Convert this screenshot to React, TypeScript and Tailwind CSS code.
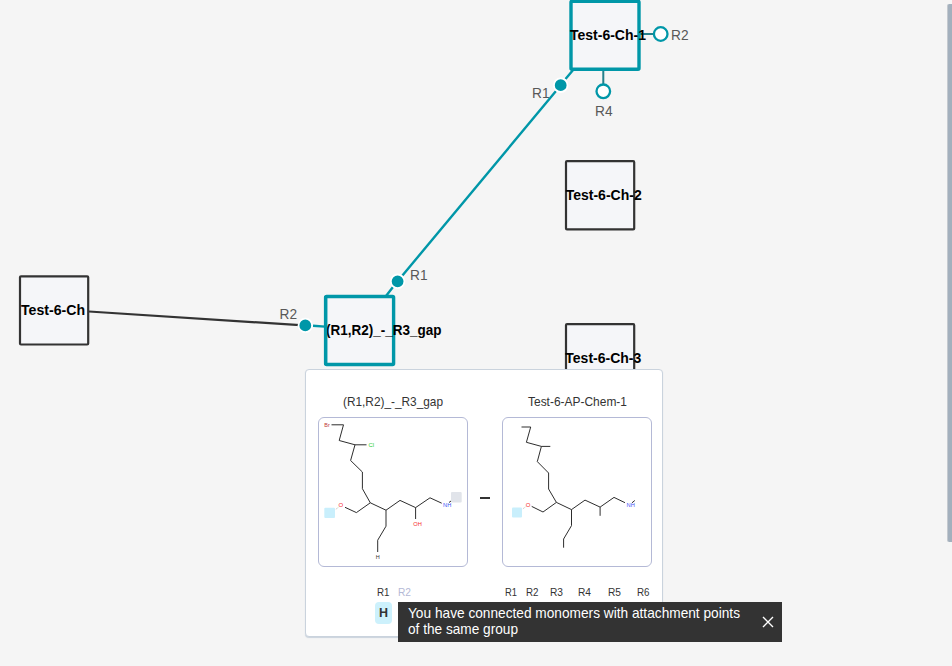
import React from "react";

const TEAL = "#0097a8";
const DARK = "#333333";

type NodeProps = { x: number; y: number; label: string; tx: number; width: number; selected?: boolean };

function MonomerNode({ x, y, label, tx, width, selected }: NodeProps) {
  const sw = selected ? 3.4 : 2.2;
  return (
    <g>
      <rect x={x} y={y} width={selected ? 68 : 68.2} height={selected ? 68 : 68.2} rx="1" fill="#f5f6f9" stroke={selected ? TEAL : DARK} strokeWidth={sw} />
      <text x={tx} y={y + 38.8} textLength={width} lengthAdjust="spacingAndGlyphs" fontSize="14.6" fontWeight="700" fill="#000">{label}</text>
    </g>
  );
}

function PointLabel({ x, y, children }: { x: number; y: number; children: string }) {
  return <text x={x} y={y} fontSize="14.8" fill="#585858" textLength="17.5" lengthAdjust="spacingAndGlyphs">{children}</text>;
}

function Canvas() {
  return (
    <svg className="absolute inset-0" width="952" height="666" viewBox="0 0 952 666" fill="none">
      <path d="M89 311.5L300 325.2" stroke={DARK} strokeWidth="2.2" />
      <path d="M313 325.8L325 326.6M386 296L393 287M402 276L556 91M565.5 79L573.5 69.5" stroke={TEAL} strokeWidth="2.4" />
      <path d="M640 34H654M603.3 70V85" stroke="#24808b" strokeWidth="2" />
      <MonomerNode x={571} y={1.2} label="Test-6-Ch-1" tx={570} width={76} selected />
      <MonomerNode x={20} y={276.3} label="Test-6-Ch" tx={21} width={64} />
      <MonomerNode x={325.6} y={296.5} label="(R1,R2)_-_R3_gap" tx={326} width={115.5} selected />
      <path d="M325.6 296V365" stroke={TEAL} strokeWidth="3.2" />
      <MonomerNode x={566} y={161.2} label="Test-6-Ch-2" tx={565.7} width={76} />
      <MonomerNode x={566} y={324.2} label="Test-6-Ch-3" tx={565.3} width={76} />
      <g fill={TEAL} stroke="#fff" strokeWidth="1.8">
        <circle cx="560.7" cy="85.2" r="6.8" />
        <circle cx="397.6" cy="281.3" r="6.8" />
        <circle cx="305.3" cy="325.4" r="6.8" />
      </g>
      <g fill="#fff" stroke={TEAL} strokeWidth="2.3">
        <circle cx="660.7" cy="34" r="6.8" />
        <circle cx="603.3" cy="91.3" r="6.8" />
      </g>
      <PointLabel x={671} y={40}>R2</PointLabel>
      <PointLabel x={532} y={98}>R1</PointLabel>
      <PointLabel x={595} y={116}>R4</PointLabel>
      <PointLabel x={410} y={280}>R1</PointLabel>
      <PointLabel x={279.5} y={319}>R2</PointLabel>
    </svg>
  );
}

function MoleculeLeft() {
  return (
    <svg width="148" height="148" viewBox="319 418 148 148" fill="none">
      <g stroke="#222" strokeWidth="0.95">
        <path d="M331.5 424.8H343.5L339.2 440.5L355 444.8H366.5M355 444.8L350.6 460.5L362.4 472V488.7L370.3 502.8L386 510.2L400 500.4L415.6 507.6L430 497.8L441.7 503.2M370.3 502.8L356.4 512.6L345 507.3M415.6 507.6V519M386 510.2V526.2L377.7 540.2V552" />
        <path d="M449 502.5L453 499.5" />
      </g>
      <path d="M338.3 507.4L335.5 509.5" stroke="#aaa" strokeWidth="0.8" strokeDasharray="1 1" />
      <rect x="324.3" y="507.8" width="10.7" height="10.2" rx="1" fill="#c9effc" />
      <rect x="451" y="492" width="10.7" height="10.6" rx="1" fill="#e1e4ea" />
      <g fontSize="6" textAnchor="middle">
        <text x="327" y="427" fill="#bd3535" fontSize="5.5">Br</text>
        <text x="371.2" y="447" fill="#22cf32" fontSize="5.8">Cl</text>
        <text x="340.8" y="507.2" fill="#f52c2c">O</text>
        <text x="417.6" y="526" fill="#f52c2c" fontSize="5.7">OH</text>
        <text x="447.2" y="507" fill="#4054f5" fontSize="5.7">NH</text>
        <text x="377.7" y="559.2" fill="#333" fontSize="5.5">H</text>
      </g>
    </svg>
  );
}

function MoleculeRight() {
  return (
    <svg width="148" height="148" viewBox="503 418 148 148" fill="none">
      <g stroke="#222" strokeWidth="0.95">
        <path d="M521.5 427H530.7L526.4 442.3L541.4 446.4H550.3M541.4 446.4L537.3 461.6L548.6 473V489L556.4 502.4L571.5 509.6L585 500.1L600.1 507.1L614 497.4L625 502.7M556.4 502.4L543 512L531.7 506.4M600.1 507.1V515.8M571.5 509.6V525.6L563.6 539V547.7" />
        <path d="M632 502.8L634.8 500.5" />
      </g>
      <path d="M525.3 507L522.3 509.3" stroke="#aaa" strokeWidth="0.8" strokeDasharray="1 1" />
      <rect x="512" y="507.4" width="10" height="10" rx="1" fill="#c9effc" />
      <g fontSize="6" textAnchor="middle">
        <text x="528" y="507.1" fill="#f52c2c">O</text>
        <text x="630.7" y="507" fill="#4054f5" fontSize="5.7">NH</text>
      </g>
    </svg>
  );
}

function FitText({ text, width, size, color = DARK }: { text: string; width: number; size: number; color?: string }) {
  return (
    <svg width={width} height="16" className="block shrink-0 overflow-visible">
      <text x="0" y="12" fontSize={size} fill={color} textLength={width} lengthAdjust="spacingAndGlyphs">{text}</text>
    </svg>
  );
}

export default function App() {
  return (
    <main className="relative h-[666px] w-[952px] overflow-hidden bg-[#f5f5f5] font-['Liberation_Sans',Arial,sans-serif] text-[#333]">
      <Canvas />

      <section className="absolute left-[305px] top-[369px] h-[268px] w-[358px] rounded-[4px] border border-[#cad3dd] bg-white shadow-[0_1px_1px_#cad3dd]">
        <div className="flex items-start px-3 pt-6">
          <div className="flex w-[150px] shrink-0 flex-col items-center">
            <FitText text="(R1,R2)_-_R3_gap" width={100} size={12.8} />
            <div className="mt-[7px] h-[150px] w-[150px] rounded-[6px] border border-[#b4b9d6]"><MoleculeLeft /></div>
            <div className="mt-[17px] ml-[57px] flex items-start gap-[6px] self-start">
              <div className="flex w-[17px] flex-col items-center">
                <FitText text="R1" width={12.5} size={11} />
                <div className="mt-[2px] flex h-[22px] w-[17px] shrink-0 items-center justify-center rounded-[4px] bg-[#cdf1fc] text-[12.5px] font-bold leading-none">H</div>
              </div>
              <FitText text="R2" width={13} size={11} color="#b4b9d6" />
            </div>
          </div>
          <div className="mt-[102.5px] ml-3 h-[2px] w-[10px] shrink-0 bg-[#333]" />
          <div className="ml-3 flex w-[150px] shrink-0 flex-col items-center">
            <FitText text="Test-6-AP-Chem-1" width={99} size={12.8} />
            <div className="mt-[7px] h-[150px] w-[150px] rounded-[6px] border border-[#b4b9d6]"><MoleculeRight /></div>
            <div className="mt-[17px] ml-[3px] flex self-start">
              <div className="flex flex-col">
                <FitText text="R1" width={12} size={11} />
                <div className="mt-[2px] -ml-px h-[22px] w-[15px] rounded-[4px] bg-[#cdf1fc]" />
              </div>
              <div className="ml-[7px] flex">
                <FitText text="R2" width={12.5} size={11} />
                <div className="ml-[11px]"><FitText text="R3" width={13} size={11} /></div>
                <div className="ml-[15px]"><FitText text="R4" width={13} size={11} /></div>
                <div className="ml-[17px]"><FitText text="R5" width={13} size={11} /></div>
                <div className="ml-[16px]"><FitText text="R6" width={12.5} size={11} /></div>
              </div>
            </div>
          </div>
        </div>
      </section>

      <div role="alert" className="absolute left-[398px] top-[602px] flex h-10 w-[384px] items-center justify-between bg-[#333] pl-[10px] pr-2">
        <div className="flex flex-col">
          <FitText text="You have connected monomers with attachment points" width={332} size={14.8} color="#fff" />
          <FitText text="of the same group" width={110} size={14.8} color="#fff" />
        </div>
        <svg width="12" height="12" viewBox="0 0 12 12" stroke="#fff" strokeWidth="1.4"><path d="M1 1L11 11M11 1L1 11" /></svg>
      </div>

      <div className="absolute left-[947px] top-[4px] h-[538px] w-[8px] rounded-[2px] border-l border-[#c4c9cf] bg-[#a3b0bd]" />
    </main>
  );
}
